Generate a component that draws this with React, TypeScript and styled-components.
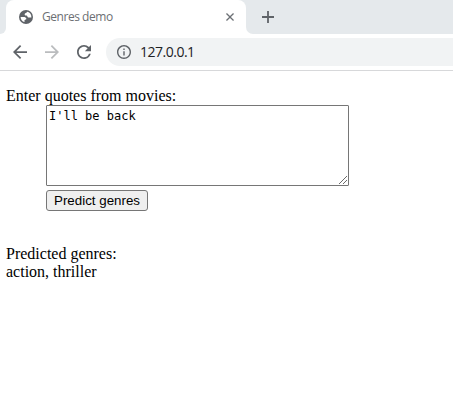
import React from "react";
import styled, { createGlobalStyle } from "styled-components";

const GlobalStyle = createGlobalStyle`
  * { box-sizing: border-box; }
  body {
    margin: 0;
    background: #fff;
    color: #000;
    overflow: hidden;
  }
`;

const Window = styled.div`
  display: flex;
  flex-direction: column;
  width: 453px;
  height: 409px;
`;

const TabStrip = styled.header`
  display: flex;
  height: 34px;
  background: #fff;
`;

const StripStart = styled.div`
  width: 6px;
  background: #e5e9ec;
  border-bottom-right-radius: 7px;
`;

const StripEnd = styled.div`
  display: flex;
  flex: 1;
  align-items: center;
  padding-left: 16px;
  background: #e5e9ec;
  border-bottom-left-radius: 7px;
`;

const TabFrame = styled.div`
  width: 240px;
  background: linear-gradient(#e5e9ec 12px, #fff 12px);
`;

const Tab = styled.div`
  display: flex;
  align-items: center;
  height: 34px;
  padding: 0 12px 0 13px;
  border-radius: 8px 8px 0 0;
  background: #fff;
`;

const TabTitle = styled.span`
  flex: 1;
  margin-left: 9px;
  font: 12px/16px "Open Sans", "Noto Sans", sans-serif;
  letter-spacing: -0.46px;
  color: #6c6f73;
`;

const Toolbar = styled.nav`
  display: flex;
  align-items: center;
  height: 37px;
  padding-left: 13px;
  gap: 18px;
  border-bottom: 1px solid #d7d8da;
  background: #fff;
`;

const AddressBar = styled.div`
  display: flex;
  flex: 1;
  align-items: center;
  height: 28px;
  margin-left: -3px;
  padding-left: 11px;
  border-radius: 14px 0 0 14px;
  background: #f1f3f4;
`;

const Address = styled.span`
  margin-left: 9px;
  font: 14px/20px "Open Sans", "Noto Sans", sans-serif;
  letter-spacing: -0.5px;
  color: #202124;
`;

const Icon = styled.svg<{ $size: number; $color?: string }>`
  display: block;
  flex: none;
  width: ${(p) => p.$size}px;
  height: ${(p) => p.$size}px;
  fill: ${(p) => p.$color ?? "#5f6368"};
`;

const Page = styled.main`
  padding: 16px 6px;
  font: 16px/18px "Liberation Serif", "Times New Roman", serif;
`;

const Fields = styled.form`
  display: flex;
  flex-direction: column;
  align-items: flex-start;
  gap: 4px;
  margin-left: 40px;
`;

const QuoteBox = styled.div`
  position: relative;
  width: 303px;
  height: 81px;
`;

const QuoteInput = styled.textarea`
  display: block;
  width: 100%;
  height: 100%;
  margin: 0;
  padding: 3px 2px 2px;
  border: 1px solid #767676;
  border-radius: 1px;
  outline: none;
  resize: none;
  font: 12px/15px "DejaVu Sans Mono", monospace;
  color: #000;
  background: #fff;
`;

const ResizeGrip = styled.svg`
  position: absolute;
  right: 2px;
  bottom: 2px;
  width: 8px;
  height: 8px;
  stroke: #6b6b6b;
  fill: none;
  pointer-events: none;
`;

const PredictButton = styled.button`
  width: 102px;
  height: 21px;
  padding: 0;
  border: 1px solid #767676;
  border-radius: 3px;
  background: #efefef;
  color: #000;
  font: 13.333px/15px "Liberation Sans", Arial, sans-serif;
  white-space: nowrap;
`;

const Result = styled.section`
  margin-top: 34px;
`;

export default function App() {
  return (
    <Window>
      <GlobalStyle />
      <TabStrip>
        <StripStart />
        <TabFrame>
          <Tab>
            <Icon $size={14} viewBox="0 0 14 14">
              <circle cx="7" cy="7" r="7" />
              <path
                fill="#fff"
                d="M8.400 1.700C7.600 2 7.800 2.800 6.900 3.100C5.900 3.400 5.500 4 5.700 4.700C5.900 5.500 7 5.300 7.700 5.600C8.600 6 8.200 7.200 9.200 7.500C10.200 7.700 10.900 7.300 12.400 7.400C12.600 4.700 11.100 2.400 8.400 1.700z"
              />
              <path
                fill="#fff"
                d="M1.600 7H4.600C6 7 7.200 7.600 7.400 8.800C7.400 9.700 6.200 9.700 5.700 10.100C5.300 10.500 5.700 11.300 5.500 12.100C3.200 11.500 1.600 9.400 1.600 7z"
              />
            </Icon>
            <TabTitle>Genres demo</TabTitle>
            <Icon $size={8} $color="#6c7075" viewBox="5 5 14 14">
              <path d="M19 6.600 17.400 5 12 10.400 6.600 5 5 6.600 10.400 12 5 17.400 6.600 19 12 13.600 17.400 19 19 17.400 13.600 12z" />
            </Icon>
          </Tab>
        </TabFrame>
        <StripEnd>
          <Icon $size={12} viewBox="0 0 12 12">
            <path d="M5.100 0h1.800v5.100H12v1.800H6.900V12H5.100V6.900H0V5.100h5.100z" />
          </Icon>
        </StripEnd>
      </TabStrip>
      <Toolbar>
        <Icon $size={14} viewBox="4 4 16 16">
          <path d="M20 11H7.830l5.590-5.590L12 4l-8 8 8 8 1.410-1.410L7.830 13H20v-2z" />
        </Icon>
        <Icon $size={14} $color="#babcbe" viewBox="4 4 16 16">
          <path d="M12 4l-1.410 1.410L16.170 11H4v2h12.170l-5.580 5.590L12 20l8-8z" />
        </Icon>
        <Icon $size={14} viewBox="4 4 16 16">
          <path d="M17.650 6.350A7.958 7.958 0 0 0 12 4c-4.420 0-7.990 3.580-7.990 8s3.570 8 7.990 8c3.730 0 6.840-2.550 7.730-6h-2.080A5.990 5.990 0 0 1 12 18c-3.310 0-6-2.690-6-6s2.690-6 6-6c1.660 0 3.140.69 4.220 1.780L13 11h7V4l-2.350 2.350z" />
        </Icon>
        <AddressBar>
          <Icon $size={14} viewBox="2 2 20 20">
            <path d="M11 7h2v2h-2zm0 4h2v6h-2zm1-9C6.480 2 2 6.480 2 12s4.480 10 10 10 10-4.480 10-10S17.520 2 12 2zm0 18c-4.410 0-8-3.590-8-8s3.590-8 8-8 8 3.590 8 8-3.590 8-8 8z" />
          </Icon>
          <Address>127.0.0.1</Address>
        </AddressBar>
      </Toolbar>
      <Page>
        <div>Enter quotes from movies:</div>
        <Fields onSubmit={(e) => e.preventDefault()}>
          <QuoteBox>
            <QuoteInput defaultValue="I'll be back" spellCheck={false} />
            <ResizeGrip viewBox="0 0 8 8">
              <path d="M0 8L8 0M4 8L8 4" />
            </ResizeGrip>
          </QuoteBox>
          <PredictButton type="submit">Predict genres</PredictButton>
        </Fields>
        <Result>
          <div>Predicted genres:</div>
          <div>action, thriller</div>
        </Result>
      </Page>
    </Window>
  );
}
